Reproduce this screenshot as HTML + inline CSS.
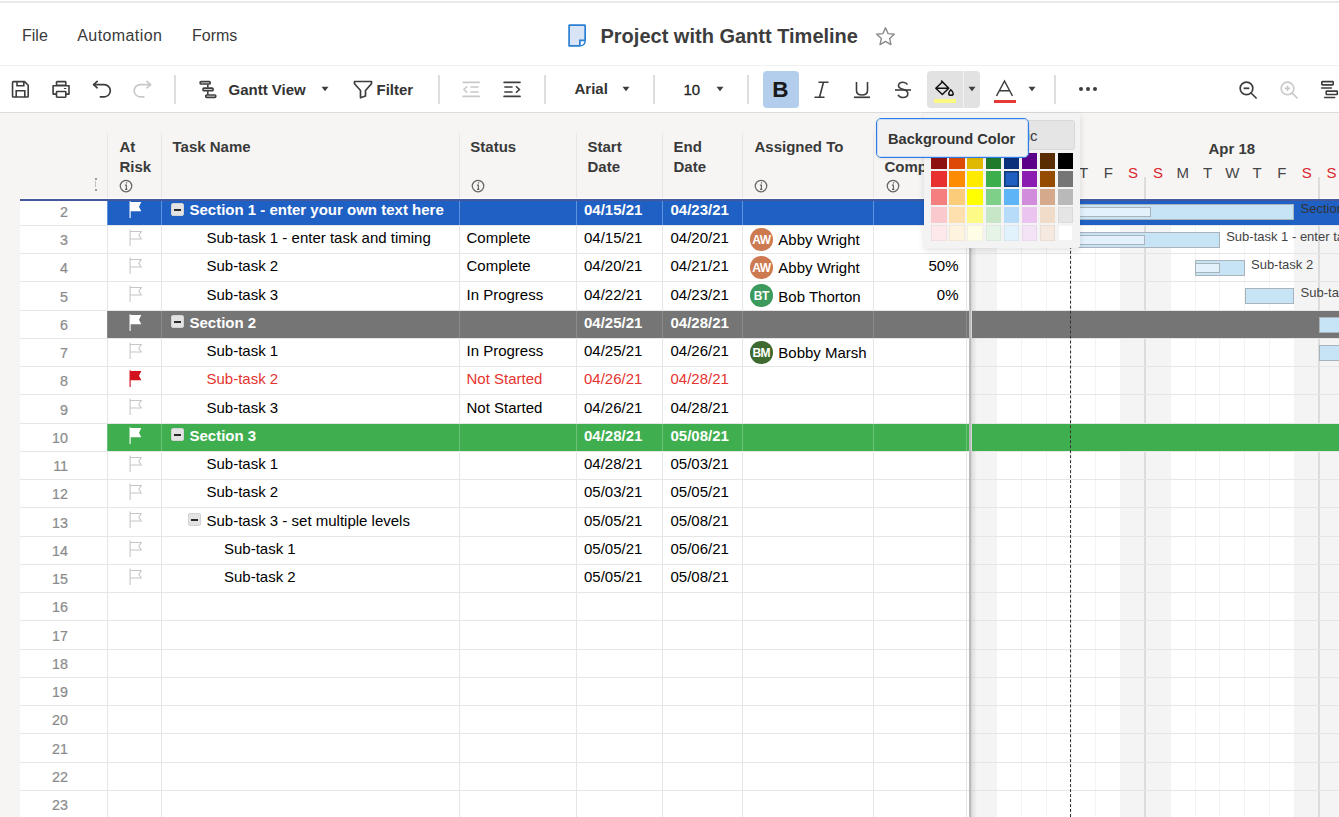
<!DOCTYPE html><html><head><meta charset="utf-8"><style>
html,body{margin:0;padding:0;}
body{width:1339px;height:817px;position:relative;overflow:hidden;background:#fff;font-family:"Liberation Sans",sans-serif;}
.t{position:absolute;white-space:nowrap;}
.r{position:absolute;}
svg.r{overflow:visible}
</style></head><body>
<div class="r" style="left:0.00px;top:1.00px;width:1339.00px;height:2.00px;background:#e9e9e9;"></div>
<div class="t" style="left:22.00px;top:28.46px;font-size:16px;line-height:16px;font-weight:400;color:#3a3a3a;">File</div>
<div class="t" style="left:77.30px;top:28.46px;font-size:16px;line-height:16px;font-weight:400;color:#3a3a3a;letter-spacing:0.4px">Automation</div>
<div class="t" style="left:192.00px;top:28.46px;font-size:16px;line-height:16px;font-weight:400;color:#3a3a3a;">Forms</div>
<svg class="r" style="left:567px;top:23px;" width="20" height="25" viewBox="0 0 20 25"><path d="M2.1 2.6 Q2.1 2.1 2.6 2.1 H17.6 Q18.15 2.1 18.15 2.6 V16.8 Q18.15 22.9 12.1 22.9 H2.1 Z" fill="#d9e5f6" stroke="#2a7fd2" stroke-width="1.7" stroke-linejoin="round"/><path d="M12.9 17.3 H17.6 Q17.2 22.2 12.9 22.4 Z" fill="#fff"/><path d="M18.15 17.3 H12.9 V22.9" fill="none" stroke="#2a7fd2" stroke-width="1.7"/></svg>
<div class="t" style="left:600.50px;top:26.07px;font-size:20px;line-height:20px;font-weight:700;color:#3d3d3d;">Project with Gantt Timeline</div>
<svg class="r" style="left:875px;top:25.5px;" width="21" height="21" viewBox="0 0 21 21"><path d="M10.5 1.8 L13.1 7.6 L19.3 8.2 L14.6 12.4 L16 18.6 L10.5 15.4 L5 18.6 L6.4 12.4 L1.7 8.2 L7.9 7.6 Z" fill="none" stroke="#8a8a8a" stroke-width="1.4" stroke-linejoin="round"/></svg>
<div class="r" style="left:0.00px;top:65.00px;width:1339.00px;height:1.00px;background:#f1f1f1;"></div>
<div class="r" style="left:0.00px;top:112.00px;width:1339.00px;height:1.00px;background:#dcdcdc;"></div>
<svg class="r" style="left:11px;top:80px;" width="19" height="19" viewBox="0 0 19 19"><path d="M2.3 1.6 H13.6 L17.2 5.2 V16.2 Q17.2 17 16.4 17 H2.3 Q1.55 17 1.55 16.2 V2.4 Q1.55 1.6 2.3 1.6 Z" fill="none" stroke="#3d3d3d" stroke-width="1.6" stroke-linejoin="round"/><path d="M6 1.6 V5.7 H12.8 V1.6" fill="none" stroke="#3d3d3d" stroke-width="1.6"/><path d="M5.2 17 V10.8 H13.8 V17" fill="none" stroke="#3d3d3d" stroke-width="1.6"/></svg>
<svg class="r" style="left:52px;top:80px;" width="19" height="19" viewBox="0 0 19 19"><rect x="4.5" y="1.6" width="9.3" height="3.6" rx="0.6" fill="none" stroke="#3d3d3d" stroke-width="1.6"/><path d="M4.5 14.1 H1.1 V5.8 H17 V14.1 H13.8" fill="none" stroke="#3d3d3d" stroke-width="1.6" stroke-linejoin="round"/><rect x="4.5" y="11.5" width="9.3" height="5.7" rx="0.6" fill="none" stroke="#3d3d3d" stroke-width="1.6"/><rect x="11.8" y="7.9" width="2.6" height="1.1" rx="0.5" fill="#3d3d3d"/></svg>
<svg class="r" style="left:92px;top:81px;" width="20" height="18" viewBox="0 0 20 18"><path d="M1.8 3.6 H12.2 A6.1 6.1 0 0 1 12.2 15.8 H8.4" fill="none" stroke="#3d3d3d" stroke-width="1.7" stroke-linecap="round"/><path d="M5.2 0.4 L1.6 3.6 L5.2 6.8" fill="none" stroke="#3d3d3d" stroke-width="1.7" stroke-linecap="round" stroke-linejoin="round"/></svg>
<svg class="r" style="left:132px;top:81px;" width="20" height="18" viewBox="0 0 20 18"><path d="M18.4 3.6 H8.3 A6.1 6.1 0 0 0 8.3 15.8 H11.8" fill="none" stroke="#c8c8c8" stroke-width="1.7" stroke-linecap="round"/><path d="M15 0.4 L18.6 3.6 L15 6.8" fill="none" stroke="#c8c8c8" stroke-width="1.7" stroke-linecap="round" stroke-linejoin="round"/></svg>
<div class="r" style="left:174.00px;top:75.00px;width:2.00px;height:29.00px;background:#dedede;"></div>
<svg class="r" style="left:198px;top:80px;" width="20" height="19" viewBox="0 0 20 19"><rect x="2.2" y="1.6" width="9.9" height="2.4" rx="0.8" fill="none" stroke="#3d3d3d" stroke-width="1.7"/><rect x="5.1" y="8.2" width="9.9" height="2.5" rx="0.8" fill="none" stroke="#3d3d3d" stroke-width="1.7"/><rect x="7.8" y="15" width="9.9" height="2.4" rx="0.8" fill="none" stroke="#3d3d3d" stroke-width="1.7"/><path d="M9.8 4.5 V7.6 M9.8 11.3 V14.4" stroke="#3d3d3d" stroke-width="1.6"/></svg>
<div class="t" style="left:228.50px;top:81.80px;font-size:15px;line-height:15px;font-weight:700;color:#333;">Gantt View</div>
<svg class="r" style="left:321px;top:86px;" width="8" height="6" viewBox="0 0 8 6"><path d="M0.5 0.8 H7.5 L4 5.3 Z" fill="#3d3d3d"/></svg>
<svg class="r" style="left:353px;top:80px;" width="20" height="19" viewBox="0 0 20 19"><path d="M1.5 1.5 H18.5 V3.8 L12.5 10.5 V16 L7.5 17.8 V10.5 L1.5 3.8 Z" fill="none" stroke="#3d3d3d" stroke-width="1.7" stroke-linejoin="round"/></svg>
<div class="t" style="left:376.50px;top:82.10px;font-size:15px;line-height:15px;font-weight:700;color:#333;">Filter</div>
<div class="r" style="left:438.00px;top:75.00px;width:2.00px;height:29.00px;background:#dedede;"></div>
<svg class="r" style="left:461px;top:81px;" width="20" height="17" viewBox="0 0 20 17"><path d="M2.3 1.3 H18.2 M2.3 15.4 H18.2" stroke="#c8c8c8" stroke-width="1.7" stroke-linecap="round"/><path d="M9.4 6 H17.6 M9.4 11 H17.6" stroke="#c8c8c8" stroke-width="1.6"/><path d="M6.2 5.2 L2.9 8.5 L6.2 11.8" fill="none" stroke="#c8c8c8" stroke-width="1.5"/></svg>
<svg class="r" style="left:502px;top:81px;" width="20" height="17" viewBox="0 0 20 17"><path d="M2.1 1.3 H18 M2.1 15.4 H18" stroke="#3d3d3d" stroke-width="1.7" stroke-linecap="round"/><path d="M2.3 6 H10.6 M2.3 11 H10.6" stroke="#3d3d3d" stroke-width="1.6"/><path d="M14 5.2 L17.4 8.5 L14 11.8" fill="none" stroke="#3d3d3d" stroke-width="1.6"/></svg>
<div class="r" style="left:544.00px;top:75.00px;width:2.00px;height:29.00px;background:#dedede;"></div>
<div class="t" style="left:574.50px;top:81.30px;font-size:15px;line-height:15px;font-weight:700;color:#333;">Arial</div>
<svg class="r" style="left:621.5px;top:86px;" width="8" height="6" viewBox="0 0 8 6"><path d="M0.5 0.8 H7.5 L4 5.3 Z" fill="#3d3d3d"/></svg>
<div class="r" style="left:653.00px;top:75.00px;width:2.00px;height:29.00px;background:#dedede;"></div>
<div class="t" style="left:683.50px;top:81.80px;font-size:15px;line-height:15px;font-weight:400;color:#222;-webkit-text-stroke:0.3px #222">10</div>
<svg class="r" style="left:715.5px;top:86px;" width="8" height="6" viewBox="0 0 8 6"><path d="M0.5 0.8 H7.5 L4 5.3 Z" fill="#3d3d3d"/></svg>
<div class="r" style="left:747.00px;top:75.00px;width:2.00px;height:29.00px;background:#dedede;"></div>
<div class="r" style="left:763.00px;top:71.00px;width:36.00px;height:37.00px;background:#b3cdec;border-radius:4px"></div>
<div class="t" style="left:772.20px;top:78.55px;font-size:22.5px;line-height:22.5px;font-weight:700;color:#1a1a1a;">B</div>
<svg class="r" style="left:813px;top:81px;" width="17" height="18" viewBox="0 0 17 18"><path d="M5.5 1.2 H15.5 M1.5 16.3 H11.5 M10.5 1.2 L6.5 16.3" stroke="#3d3d3d" stroke-width="1.6" fill="none"/></svg>
<svg class="r" style="left:853px;top:81px;" width="18" height="18" viewBox="0 0 18 18"><path d="M3.5 1 V9.5 Q3.5 14 9 14 Q14.5 14 14.5 9.5 V1" stroke="#3d3d3d" stroke-width="1.6" fill="none"/><path d="M1 16.3 H17" stroke="#3d3d3d" stroke-width="1.7"/></svg>
<svg class="r" style="left:894px;top:81px;" width="18" height="18" viewBox="0 0 18 18"><path d="M13.5 3.5 Q12 1.2 9 1.2 Q4.5 1.2 4.5 4.8 Q4.5 7.2 9 8.2 Q13.8 9.5 13.8 12.5 Q13.8 16.5 9 16.5 Q5.5 16.5 4 13.8" stroke="#3d3d3d" stroke-width="1.6" fill="none"/><path d="M1 9 H17" stroke="#3d3d3d" stroke-width="1.6"/></svg>
<div class="r" style="left:926.50px;top:71.00px;width:53.00px;height:37.00px;background:#e2e2e2;border-radius:4px"></div>
<div class="r" style="left:963.00px;top:71.00px;width:1.00px;height:37.00px;background:#f2f2f2;"></div>
<svg class="r" style="left:934px;top:79px;" width="22" height="18" viewBox="0 0 22 18"><path d="M7.2 1.6 L14.8 9.3 L8.3 15.5 L1.8 9.3 L8.4 3 M1.8 9.3 H14.8" fill="none" stroke="#111" stroke-width="1.5" stroke-linejoin="round"/><path d="M16.8 10.8 Q19.2 13 19.2 14.4 Q19.2 16.3 16.9 16.3 Q14.7 16.3 14.7 14.4 Q14.7 13 16.8 10.8 Z" fill="none" stroke="#111" stroke-width="1.5"/></svg>
<div class="r" style="left:934.20px;top:99.40px;width:21.60px;height:3.60px;background:#faf87e;"></div>
<svg class="r" style="left:967.5px;top:86px;" width="8" height="6" viewBox="0 0 8 6"><path d="M0.5 0.8 H7.5 L4 5.3 Z" fill="#3d3d3d"/></svg>
<svg class="r" style="left:995px;top:80px;" width="19" height="17" viewBox="0 0 19 17"><path d="M1.5 16 L9.5 1 L17.5 16 M4.8 10.8 H14.2" fill="none" stroke="#3d3d3d" stroke-width="1.5"/></svg>
<div class="r" style="left:994.00px;top:99.50px;width:22.00px;height:3.50px;background:#e53935;"></div>
<svg class="r" style="left:1027.5px;top:86px;" width="8" height="6" viewBox="0 0 8 6"><path d="M0.5 0.8 H7.5 L4 5.3 Z" fill="#3d3d3d"/></svg>
<div class="r" style="left:1054.00px;top:75.00px;width:2.00px;height:29.00px;background:#dedede;"></div>
<div class="r" style="left:1078.7px;top:87.2px;width:4.2px;height:4.2px;border-radius:50%;background:#3d3d3d"></div>
<div class="r" style="left:1085.9px;top:87.2px;width:4.2px;height:4.2px;border-radius:50%;background:#3d3d3d"></div>
<div class="r" style="left:1093.1px;top:87.2px;width:4.2px;height:4.2px;border-radius:50%;background:#3d3d3d"></div>
<svg class="r" style="left:1238px;top:80.5px;" width="21" height="20" viewBox="0 0 21 20"><circle cx="8.5" cy="7.4" r="6.3" fill="none" stroke="#3d3d3d" stroke-width="1.7"/><path d="M5.6 7.3 H11.3" stroke="#3d3d3d" stroke-width="1.8"/><path d="M13.1 12 L18.6 17.5" stroke="#3d3d3d" stroke-width="1.7"/></svg>
<svg class="r" style="left:1279px;top:80.5px;" width="21" height="20" viewBox="0 0 21 20"><circle cx="8.5" cy="7.4" r="6.3" fill="none" stroke="#c8c8c8" stroke-width="1.6"/><path d="M5.8 7.4 H11.2 M8.5 4.7 V10.1" stroke="#c8c8c8" stroke-width="1.6"/><path d="M13.1 12 L18.6 17.5" stroke="#c8c8c8" stroke-width="1.6"/></svg>
<svg class="r" style="left:1320px;top:80px;" width="22" height="20" viewBox="0 0 22 20"><rect x="1.8" y="1.6" width="11.4" height="3.3" rx="0.6" fill="none" stroke="#3d3d3d" stroke-width="1.6"/><path d="M1.6 8 H11.3" stroke="#3d3d3d" stroke-width="1.5" stroke-linecap="round"/><rect x="6.2" y="11.1" width="11.1" height="3.4" rx="0.6" fill="none" stroke="#3d3d3d" stroke-width="1.6"/><path d="M4.7 17.5 H14.6" stroke="#3d3d3d" stroke-width="1.5" stroke-linecap="round"/></svg>
<div class="r" style="left:0.00px;top:113.00px;width:1339.00px;height:85.00px;background:#f6f5f4;"></div>
<div class="r" style="left:0.00px;top:198.00px;width:20.00px;height:619.00px;background:#f6f5f4;"></div>
<div class="r" style="left:20.00px;top:198.00px;width:1319.00px;height:1.00px;background:#ffffff;"></div>
<div class="r" style="left:20.00px;top:201.00px;width:1319.00px;height:616.00px;background:#fff;"></div>
<div class="r" style="left:972.00px;top:201.00px;width:24.79px;height:616.00px;background:#f4f4f4;"></div>
<div class="r" style="left:1120.74px;top:201.00px;width:24.79px;height:616.00px;background:#f4f4f4;"></div>
<div class="r" style="left:1145.53px;top:201.00px;width:24.79px;height:616.00px;background:#f4f4f4;"></div>
<div class="r" style="left:1294.27px;top:201.00px;width:24.79px;height:616.00px;background:#f4f4f4;"></div>
<div class="r" style="left:1319.06px;top:201.00px;width:24.79px;height:616.00px;background:#f4f4f4;"></div>
<div class="r" style="left:996.00px;top:201.00px;width:1.00px;height:616.00px;background:#f3f3f3;"></div>
<div class="r" style="left:1021.00px;top:201.00px;width:1.00px;height:616.00px;background:#f3f3f3;"></div>
<div class="r" style="left:1046.00px;top:201.00px;width:1.00px;height:616.00px;background:#f3f3f3;"></div>
<div class="r" style="left:1071.00px;top:201.00px;width:1.00px;height:616.00px;background:#f3f3f3;"></div>
<div class="r" style="left:1095.00px;top:201.00px;width:1.00px;height:616.00px;background:#f3f3f3;"></div>
<div class="r" style="left:1120.00px;top:201.00px;width:1.00px;height:616.00px;background:#f3f3f3;"></div>
<div class="r" style="left:1170.00px;top:201.00px;width:1.00px;height:616.00px;background:#f3f3f3;"></div>
<div class="r" style="left:1195.00px;top:201.00px;width:1.00px;height:616.00px;background:#f3f3f3;"></div>
<div class="r" style="left:1219.00px;top:201.00px;width:1.00px;height:616.00px;background:#f3f3f3;"></div>
<div class="r" style="left:1244.00px;top:201.00px;width:1.00px;height:616.00px;background:#f3f3f3;"></div>
<div class="r" style="left:1269.00px;top:201.00px;width:1.00px;height:616.00px;background:#f3f3f3;"></div>
<div class="r" style="left:1294.00px;top:201.00px;width:1.00px;height:616.00px;background:#f3f3f3;"></div>
<div class="r" style="left:1343.00px;top:201.00px;width:1.00px;height:616.00px;background:#f3f3f3;"></div>
<div class="r" style="left:1144.30px;top:177.00px;width:2.00px;height:640.00px;background:#dcdcdc;"></div>
<div class="r" style="left:1318.20px;top:177.00px;width:2.00px;height:640.00px;background:#dcdcdc;"></div>
<div class="r" style="left:107.00px;top:201.00px;width:1232.00px;height:24.00px;background:#1f60c4;"></div>
<div class="r" style="left:20.00px;top:225.00px;width:1319.00px;height:1.00px;background:#e6e6e6;"></div>
<div class="r" style="left:20.00px;top:253.00px;width:1319.00px;height:1.00px;background:#e6e6e6;"></div>
<div class="r" style="left:20.00px;top:281.00px;width:1319.00px;height:1.00px;background:#e6e6e6;"></div>
<div class="r" style="left:20.00px;top:310.00px;width:1319.00px;height:1.00px;background:#e6e6e6;"></div>
<div class="r" style="left:107.00px;top:311.00px;width:1232.00px;height:27.00px;background:#757575;"></div>
<div class="r" style="left:20.00px;top:338.00px;width:1319.00px;height:1.00px;background:#e6e6e6;"></div>
<div class="r" style="left:20.00px;top:366.00px;width:1319.00px;height:1.00px;background:#e6e6e6;"></div>
<div class="r" style="left:20.00px;top:394.00px;width:1319.00px;height:1.00px;background:#e6e6e6;"></div>
<div class="r" style="left:20.00px;top:423.00px;width:1319.00px;height:1.00px;background:#e6e6e6;"></div>
<div class="r" style="left:107.00px;top:424.00px;width:1232.00px;height:27.00px;background:#3fae4f;"></div>
<div class="r" style="left:20.00px;top:451.00px;width:1319.00px;height:1.00px;background:#e6e6e6;"></div>
<div class="r" style="left:20.00px;top:479.00px;width:1319.00px;height:1.00px;background:#e6e6e6;"></div>
<div class="r" style="left:20.00px;top:507.00px;width:1319.00px;height:1.00px;background:#e6e6e6;"></div>
<div class="r" style="left:20.00px;top:536.00px;width:1319.00px;height:1.00px;background:#e6e6e6;"></div>
<div class="r" style="left:20.00px;top:564.00px;width:1319.00px;height:1.00px;background:#e6e6e6;"></div>
<div class="r" style="left:20.00px;top:592.00px;width:1319.00px;height:1.00px;background:#e6e6e6;"></div>
<div class="r" style="left:20.00px;top:620.00px;width:1319.00px;height:1.00px;background:#e6e6e6;"></div>
<div class="r" style="left:20.00px;top:649.00px;width:1319.00px;height:1.00px;background:#e6e6e6;"></div>
<div class="r" style="left:20.00px;top:677.00px;width:1319.00px;height:1.00px;background:#e6e6e6;"></div>
<div class="r" style="left:20.00px;top:705.00px;width:1319.00px;height:1.00px;background:#e6e6e6;"></div>
<div class="r" style="left:20.00px;top:733.00px;width:1319.00px;height:1.00px;background:#e6e6e6;"></div>
<div class="r" style="left:20.00px;top:762.00px;width:1319.00px;height:1.00px;background:#e6e6e6;"></div>
<div class="r" style="left:20.00px;top:790.00px;width:1319.00px;height:1.00px;background:#e6e6e6;"></div>
<div class="r" style="left:20.00px;top:818.00px;width:1319.00px;height:1.00px;background:#e6e6e6;"></div>
<div class="r" style="left:107.00px;top:133.00px;width:1.00px;height:65.00px;background:#e6e6e6;"></div>
<div class="r" style="left:161.00px;top:133.00px;width:1.00px;height:65.00px;background:#e6e6e6;"></div>
<div class="r" style="left:459.00px;top:133.00px;width:1.00px;height:65.00px;background:#e6e6e6;"></div>
<div class="r" style="left:576.00px;top:133.00px;width:1.00px;height:65.00px;background:#e6e6e6;"></div>
<div class="r" style="left:662.00px;top:133.00px;width:1.00px;height:65.00px;background:#e6e6e6;"></div>
<div class="r" style="left:742.00px;top:133.00px;width:1.00px;height:65.00px;background:#e6e6e6;"></div>
<div class="r" style="left:873.00px;top:133.00px;width:1.00px;height:65.00px;background:#e6e6e6;"></div>
<div class="r" style="left:966.00px;top:133.00px;width:1.00px;height:65.00px;background:#e6e6e6;"></div>
<div class="r" style="left:107.00px;top:201.00px;width:1.00px;height:24.00px;background:#5f92dd;"></div>
<div class="r" style="left:107.00px;top:226.00px;width:1.00px;height:27.00px;background:#e6e6e6;"></div>
<div class="r" style="left:107.00px;top:254.00px;width:1.00px;height:27.00px;background:#e6e6e6;"></div>
<div class="r" style="left:107.00px;top:282.00px;width:1.00px;height:28.00px;background:#e6e6e6;"></div>
<div class="r" style="left:107.00px;top:311.00px;width:1.00px;height:27.00px;background:#8a8a8a;"></div>
<div class="r" style="left:107.00px;top:339.00px;width:1.00px;height:27.00px;background:#e6e6e6;"></div>
<div class="r" style="left:107.00px;top:367.00px;width:1.00px;height:27.00px;background:#e6e6e6;"></div>
<div class="r" style="left:107.00px;top:395.00px;width:1.00px;height:28.00px;background:#e6e6e6;"></div>
<div class="r" style="left:107.00px;top:424.00px;width:1.00px;height:27.00px;background:#6cc178;"></div>
<div class="r" style="left:107.00px;top:452.00px;width:1.00px;height:27.00px;background:#e6e6e6;"></div>
<div class="r" style="left:107.00px;top:480.00px;width:1.00px;height:27.00px;background:#e6e6e6;"></div>
<div class="r" style="left:107.00px;top:508.00px;width:1.00px;height:28.00px;background:#e6e6e6;"></div>
<div class="r" style="left:107.00px;top:537.00px;width:1.00px;height:27.00px;background:#e6e6e6;"></div>
<div class="r" style="left:107.00px;top:565.00px;width:1.00px;height:27.00px;background:#e6e6e6;"></div>
<div class="r" style="left:107.00px;top:593.00px;width:1.00px;height:27.00px;background:#e6e6e6;"></div>
<div class="r" style="left:107.00px;top:621.00px;width:1.00px;height:28.00px;background:#e6e6e6;"></div>
<div class="r" style="left:107.00px;top:650.00px;width:1.00px;height:27.00px;background:#e6e6e6;"></div>
<div class="r" style="left:107.00px;top:678.00px;width:1.00px;height:27.00px;background:#e6e6e6;"></div>
<div class="r" style="left:107.00px;top:706.00px;width:1.00px;height:27.00px;background:#e6e6e6;"></div>
<div class="r" style="left:107.00px;top:734.00px;width:1.00px;height:28.00px;background:#e6e6e6;"></div>
<div class="r" style="left:107.00px;top:763.00px;width:1.00px;height:27.00px;background:#e6e6e6;"></div>
<div class="r" style="left:107.00px;top:791.00px;width:1.00px;height:27.00px;background:#e6e6e6;"></div>
<div class="r" style="left:161.00px;top:201.00px;width:1.00px;height:24.00px;background:#5f92dd;"></div>
<div class="r" style="left:161.00px;top:226.00px;width:1.00px;height:27.00px;background:#e6e6e6;"></div>
<div class="r" style="left:161.00px;top:254.00px;width:1.00px;height:27.00px;background:#e6e6e6;"></div>
<div class="r" style="left:161.00px;top:282.00px;width:1.00px;height:28.00px;background:#e6e6e6;"></div>
<div class="r" style="left:161.00px;top:311.00px;width:1.00px;height:27.00px;background:#8a8a8a;"></div>
<div class="r" style="left:161.00px;top:339.00px;width:1.00px;height:27.00px;background:#e6e6e6;"></div>
<div class="r" style="left:161.00px;top:367.00px;width:1.00px;height:27.00px;background:#e6e6e6;"></div>
<div class="r" style="left:161.00px;top:395.00px;width:1.00px;height:28.00px;background:#e6e6e6;"></div>
<div class="r" style="left:161.00px;top:424.00px;width:1.00px;height:27.00px;background:#6cc178;"></div>
<div class="r" style="left:161.00px;top:452.00px;width:1.00px;height:27.00px;background:#e6e6e6;"></div>
<div class="r" style="left:161.00px;top:480.00px;width:1.00px;height:27.00px;background:#e6e6e6;"></div>
<div class="r" style="left:161.00px;top:508.00px;width:1.00px;height:28.00px;background:#e6e6e6;"></div>
<div class="r" style="left:161.00px;top:537.00px;width:1.00px;height:27.00px;background:#e6e6e6;"></div>
<div class="r" style="left:161.00px;top:565.00px;width:1.00px;height:27.00px;background:#e6e6e6;"></div>
<div class="r" style="left:161.00px;top:593.00px;width:1.00px;height:27.00px;background:#e6e6e6;"></div>
<div class="r" style="left:161.00px;top:621.00px;width:1.00px;height:28.00px;background:#e6e6e6;"></div>
<div class="r" style="left:161.00px;top:650.00px;width:1.00px;height:27.00px;background:#e6e6e6;"></div>
<div class="r" style="left:161.00px;top:678.00px;width:1.00px;height:27.00px;background:#e6e6e6;"></div>
<div class="r" style="left:161.00px;top:706.00px;width:1.00px;height:27.00px;background:#e6e6e6;"></div>
<div class="r" style="left:161.00px;top:734.00px;width:1.00px;height:28.00px;background:#e6e6e6;"></div>
<div class="r" style="left:161.00px;top:763.00px;width:1.00px;height:27.00px;background:#e6e6e6;"></div>
<div class="r" style="left:161.00px;top:791.00px;width:1.00px;height:27.00px;background:#e6e6e6;"></div>
<div class="r" style="left:459.00px;top:201.00px;width:1.00px;height:24.00px;background:#5f92dd;"></div>
<div class="r" style="left:459.00px;top:226.00px;width:1.00px;height:27.00px;background:#e6e6e6;"></div>
<div class="r" style="left:459.00px;top:254.00px;width:1.00px;height:27.00px;background:#e6e6e6;"></div>
<div class="r" style="left:459.00px;top:282.00px;width:1.00px;height:28.00px;background:#e6e6e6;"></div>
<div class="r" style="left:459.00px;top:311.00px;width:1.00px;height:27.00px;background:#8a8a8a;"></div>
<div class="r" style="left:459.00px;top:339.00px;width:1.00px;height:27.00px;background:#e6e6e6;"></div>
<div class="r" style="left:459.00px;top:367.00px;width:1.00px;height:27.00px;background:#e6e6e6;"></div>
<div class="r" style="left:459.00px;top:395.00px;width:1.00px;height:28.00px;background:#e6e6e6;"></div>
<div class="r" style="left:459.00px;top:424.00px;width:1.00px;height:27.00px;background:#6cc178;"></div>
<div class="r" style="left:459.00px;top:452.00px;width:1.00px;height:27.00px;background:#e6e6e6;"></div>
<div class="r" style="left:459.00px;top:480.00px;width:1.00px;height:27.00px;background:#e6e6e6;"></div>
<div class="r" style="left:459.00px;top:508.00px;width:1.00px;height:28.00px;background:#e6e6e6;"></div>
<div class="r" style="left:459.00px;top:537.00px;width:1.00px;height:27.00px;background:#e6e6e6;"></div>
<div class="r" style="left:459.00px;top:565.00px;width:1.00px;height:27.00px;background:#e6e6e6;"></div>
<div class="r" style="left:459.00px;top:593.00px;width:1.00px;height:27.00px;background:#e6e6e6;"></div>
<div class="r" style="left:459.00px;top:621.00px;width:1.00px;height:28.00px;background:#e6e6e6;"></div>
<div class="r" style="left:459.00px;top:650.00px;width:1.00px;height:27.00px;background:#e6e6e6;"></div>
<div class="r" style="left:459.00px;top:678.00px;width:1.00px;height:27.00px;background:#e6e6e6;"></div>
<div class="r" style="left:459.00px;top:706.00px;width:1.00px;height:27.00px;background:#e6e6e6;"></div>
<div class="r" style="left:459.00px;top:734.00px;width:1.00px;height:28.00px;background:#e6e6e6;"></div>
<div class="r" style="left:459.00px;top:763.00px;width:1.00px;height:27.00px;background:#e6e6e6;"></div>
<div class="r" style="left:459.00px;top:791.00px;width:1.00px;height:27.00px;background:#e6e6e6;"></div>
<div class="r" style="left:576.00px;top:201.00px;width:1.00px;height:24.00px;background:#5f92dd;"></div>
<div class="r" style="left:576.00px;top:226.00px;width:1.00px;height:27.00px;background:#e6e6e6;"></div>
<div class="r" style="left:576.00px;top:254.00px;width:1.00px;height:27.00px;background:#e6e6e6;"></div>
<div class="r" style="left:576.00px;top:282.00px;width:1.00px;height:28.00px;background:#e6e6e6;"></div>
<div class="r" style="left:576.00px;top:311.00px;width:1.00px;height:27.00px;background:#8a8a8a;"></div>
<div class="r" style="left:576.00px;top:339.00px;width:1.00px;height:27.00px;background:#e6e6e6;"></div>
<div class="r" style="left:576.00px;top:367.00px;width:1.00px;height:27.00px;background:#e6e6e6;"></div>
<div class="r" style="left:576.00px;top:395.00px;width:1.00px;height:28.00px;background:#e6e6e6;"></div>
<div class="r" style="left:576.00px;top:424.00px;width:1.00px;height:27.00px;background:#6cc178;"></div>
<div class="r" style="left:576.00px;top:452.00px;width:1.00px;height:27.00px;background:#e6e6e6;"></div>
<div class="r" style="left:576.00px;top:480.00px;width:1.00px;height:27.00px;background:#e6e6e6;"></div>
<div class="r" style="left:576.00px;top:508.00px;width:1.00px;height:28.00px;background:#e6e6e6;"></div>
<div class="r" style="left:576.00px;top:537.00px;width:1.00px;height:27.00px;background:#e6e6e6;"></div>
<div class="r" style="left:576.00px;top:565.00px;width:1.00px;height:27.00px;background:#e6e6e6;"></div>
<div class="r" style="left:576.00px;top:593.00px;width:1.00px;height:27.00px;background:#e6e6e6;"></div>
<div class="r" style="left:576.00px;top:621.00px;width:1.00px;height:28.00px;background:#e6e6e6;"></div>
<div class="r" style="left:576.00px;top:650.00px;width:1.00px;height:27.00px;background:#e6e6e6;"></div>
<div class="r" style="left:576.00px;top:678.00px;width:1.00px;height:27.00px;background:#e6e6e6;"></div>
<div class="r" style="left:576.00px;top:706.00px;width:1.00px;height:27.00px;background:#e6e6e6;"></div>
<div class="r" style="left:576.00px;top:734.00px;width:1.00px;height:28.00px;background:#e6e6e6;"></div>
<div class="r" style="left:576.00px;top:763.00px;width:1.00px;height:27.00px;background:#e6e6e6;"></div>
<div class="r" style="left:576.00px;top:791.00px;width:1.00px;height:27.00px;background:#e6e6e6;"></div>
<div class="r" style="left:662.00px;top:201.00px;width:1.00px;height:24.00px;background:#5f92dd;"></div>
<div class="r" style="left:662.00px;top:226.00px;width:1.00px;height:27.00px;background:#e6e6e6;"></div>
<div class="r" style="left:662.00px;top:254.00px;width:1.00px;height:27.00px;background:#e6e6e6;"></div>
<div class="r" style="left:662.00px;top:282.00px;width:1.00px;height:28.00px;background:#e6e6e6;"></div>
<div class="r" style="left:662.00px;top:311.00px;width:1.00px;height:27.00px;background:#8a8a8a;"></div>
<div class="r" style="left:662.00px;top:339.00px;width:1.00px;height:27.00px;background:#e6e6e6;"></div>
<div class="r" style="left:662.00px;top:367.00px;width:1.00px;height:27.00px;background:#e6e6e6;"></div>
<div class="r" style="left:662.00px;top:395.00px;width:1.00px;height:28.00px;background:#e6e6e6;"></div>
<div class="r" style="left:662.00px;top:424.00px;width:1.00px;height:27.00px;background:#6cc178;"></div>
<div class="r" style="left:662.00px;top:452.00px;width:1.00px;height:27.00px;background:#e6e6e6;"></div>
<div class="r" style="left:662.00px;top:480.00px;width:1.00px;height:27.00px;background:#e6e6e6;"></div>
<div class="r" style="left:662.00px;top:508.00px;width:1.00px;height:28.00px;background:#e6e6e6;"></div>
<div class="r" style="left:662.00px;top:537.00px;width:1.00px;height:27.00px;background:#e6e6e6;"></div>
<div class="r" style="left:662.00px;top:565.00px;width:1.00px;height:27.00px;background:#e6e6e6;"></div>
<div class="r" style="left:662.00px;top:593.00px;width:1.00px;height:27.00px;background:#e6e6e6;"></div>
<div class="r" style="left:662.00px;top:621.00px;width:1.00px;height:28.00px;background:#e6e6e6;"></div>
<div class="r" style="left:662.00px;top:650.00px;width:1.00px;height:27.00px;background:#e6e6e6;"></div>
<div class="r" style="left:662.00px;top:678.00px;width:1.00px;height:27.00px;background:#e6e6e6;"></div>
<div class="r" style="left:662.00px;top:706.00px;width:1.00px;height:27.00px;background:#e6e6e6;"></div>
<div class="r" style="left:662.00px;top:734.00px;width:1.00px;height:28.00px;background:#e6e6e6;"></div>
<div class="r" style="left:662.00px;top:763.00px;width:1.00px;height:27.00px;background:#e6e6e6;"></div>
<div class="r" style="left:662.00px;top:791.00px;width:1.00px;height:27.00px;background:#e6e6e6;"></div>
<div class="r" style="left:742.00px;top:201.00px;width:1.00px;height:24.00px;background:#5f92dd;"></div>
<div class="r" style="left:742.00px;top:226.00px;width:1.00px;height:27.00px;background:#e6e6e6;"></div>
<div class="r" style="left:742.00px;top:254.00px;width:1.00px;height:27.00px;background:#e6e6e6;"></div>
<div class="r" style="left:742.00px;top:282.00px;width:1.00px;height:28.00px;background:#e6e6e6;"></div>
<div class="r" style="left:742.00px;top:311.00px;width:1.00px;height:27.00px;background:#8a8a8a;"></div>
<div class="r" style="left:742.00px;top:339.00px;width:1.00px;height:27.00px;background:#e6e6e6;"></div>
<div class="r" style="left:742.00px;top:367.00px;width:1.00px;height:27.00px;background:#e6e6e6;"></div>
<div class="r" style="left:742.00px;top:395.00px;width:1.00px;height:28.00px;background:#e6e6e6;"></div>
<div class="r" style="left:742.00px;top:424.00px;width:1.00px;height:27.00px;background:#6cc178;"></div>
<div class="r" style="left:742.00px;top:452.00px;width:1.00px;height:27.00px;background:#e6e6e6;"></div>
<div class="r" style="left:742.00px;top:480.00px;width:1.00px;height:27.00px;background:#e6e6e6;"></div>
<div class="r" style="left:742.00px;top:508.00px;width:1.00px;height:28.00px;background:#e6e6e6;"></div>
<div class="r" style="left:742.00px;top:537.00px;width:1.00px;height:27.00px;background:#e6e6e6;"></div>
<div class="r" style="left:742.00px;top:565.00px;width:1.00px;height:27.00px;background:#e6e6e6;"></div>
<div class="r" style="left:742.00px;top:593.00px;width:1.00px;height:27.00px;background:#e6e6e6;"></div>
<div class="r" style="left:742.00px;top:621.00px;width:1.00px;height:28.00px;background:#e6e6e6;"></div>
<div class="r" style="left:742.00px;top:650.00px;width:1.00px;height:27.00px;background:#e6e6e6;"></div>
<div class="r" style="left:742.00px;top:678.00px;width:1.00px;height:27.00px;background:#e6e6e6;"></div>
<div class="r" style="left:742.00px;top:706.00px;width:1.00px;height:27.00px;background:#e6e6e6;"></div>
<div class="r" style="left:742.00px;top:734.00px;width:1.00px;height:28.00px;background:#e6e6e6;"></div>
<div class="r" style="left:742.00px;top:763.00px;width:1.00px;height:27.00px;background:#e6e6e6;"></div>
<div class="r" style="left:742.00px;top:791.00px;width:1.00px;height:27.00px;background:#e6e6e6;"></div>
<div class="r" style="left:873.00px;top:201.00px;width:1.00px;height:24.00px;background:#5f92dd;"></div>
<div class="r" style="left:873.00px;top:226.00px;width:1.00px;height:27.00px;background:#e6e6e6;"></div>
<div class="r" style="left:873.00px;top:254.00px;width:1.00px;height:27.00px;background:#e6e6e6;"></div>
<div class="r" style="left:873.00px;top:282.00px;width:1.00px;height:28.00px;background:#e6e6e6;"></div>
<div class="r" style="left:873.00px;top:311.00px;width:1.00px;height:27.00px;background:#8a8a8a;"></div>
<div class="r" style="left:873.00px;top:339.00px;width:1.00px;height:27.00px;background:#e6e6e6;"></div>
<div class="r" style="left:873.00px;top:367.00px;width:1.00px;height:27.00px;background:#e6e6e6;"></div>
<div class="r" style="left:873.00px;top:395.00px;width:1.00px;height:28.00px;background:#e6e6e6;"></div>
<div class="r" style="left:873.00px;top:424.00px;width:1.00px;height:27.00px;background:#6cc178;"></div>
<div class="r" style="left:873.00px;top:452.00px;width:1.00px;height:27.00px;background:#e6e6e6;"></div>
<div class="r" style="left:873.00px;top:480.00px;width:1.00px;height:27.00px;background:#e6e6e6;"></div>
<div class="r" style="left:873.00px;top:508.00px;width:1.00px;height:28.00px;background:#e6e6e6;"></div>
<div class="r" style="left:873.00px;top:537.00px;width:1.00px;height:27.00px;background:#e6e6e6;"></div>
<div class="r" style="left:873.00px;top:565.00px;width:1.00px;height:27.00px;background:#e6e6e6;"></div>
<div class="r" style="left:873.00px;top:593.00px;width:1.00px;height:27.00px;background:#e6e6e6;"></div>
<div class="r" style="left:873.00px;top:621.00px;width:1.00px;height:28.00px;background:#e6e6e6;"></div>
<div class="r" style="left:873.00px;top:650.00px;width:1.00px;height:27.00px;background:#e6e6e6;"></div>
<div class="r" style="left:873.00px;top:678.00px;width:1.00px;height:27.00px;background:#e6e6e6;"></div>
<div class="r" style="left:873.00px;top:706.00px;width:1.00px;height:27.00px;background:#e6e6e6;"></div>
<div class="r" style="left:873.00px;top:734.00px;width:1.00px;height:28.00px;background:#e6e6e6;"></div>
<div class="r" style="left:873.00px;top:763.00px;width:1.00px;height:27.00px;background:#e6e6e6;"></div>
<div class="r" style="left:873.00px;top:791.00px;width:1.00px;height:27.00px;background:#e6e6e6;"></div>
<div class="r" style="left:966.00px;top:201.00px;width:1.00px;height:24.00px;background:#5f92dd;"></div>
<div class="r" style="left:966.00px;top:226.00px;width:1.00px;height:27.00px;background:#e6e6e6;"></div>
<div class="r" style="left:966.00px;top:254.00px;width:1.00px;height:27.00px;background:#e6e6e6;"></div>
<div class="r" style="left:966.00px;top:282.00px;width:1.00px;height:28.00px;background:#e6e6e6;"></div>
<div class="r" style="left:966.00px;top:311.00px;width:1.00px;height:27.00px;background:#8a8a8a;"></div>
<div class="r" style="left:966.00px;top:339.00px;width:1.00px;height:27.00px;background:#e6e6e6;"></div>
<div class="r" style="left:966.00px;top:367.00px;width:1.00px;height:27.00px;background:#e6e6e6;"></div>
<div class="r" style="left:966.00px;top:395.00px;width:1.00px;height:28.00px;background:#e6e6e6;"></div>
<div class="r" style="left:966.00px;top:424.00px;width:1.00px;height:27.00px;background:#6cc178;"></div>
<div class="r" style="left:966.00px;top:452.00px;width:1.00px;height:27.00px;background:#e6e6e6;"></div>
<div class="r" style="left:966.00px;top:480.00px;width:1.00px;height:27.00px;background:#e6e6e6;"></div>
<div class="r" style="left:966.00px;top:508.00px;width:1.00px;height:28.00px;background:#e6e6e6;"></div>
<div class="r" style="left:966.00px;top:537.00px;width:1.00px;height:27.00px;background:#e6e6e6;"></div>
<div class="r" style="left:966.00px;top:565.00px;width:1.00px;height:27.00px;background:#e6e6e6;"></div>
<div class="r" style="left:966.00px;top:593.00px;width:1.00px;height:27.00px;background:#e6e6e6;"></div>
<div class="r" style="left:966.00px;top:621.00px;width:1.00px;height:28.00px;background:#e6e6e6;"></div>
<div class="r" style="left:966.00px;top:650.00px;width:1.00px;height:27.00px;background:#e6e6e6;"></div>
<div class="r" style="left:966.00px;top:678.00px;width:1.00px;height:27.00px;background:#e6e6e6;"></div>
<div class="r" style="left:966.00px;top:706.00px;width:1.00px;height:27.00px;background:#e6e6e6;"></div>
<div class="r" style="left:966.00px;top:734.00px;width:1.00px;height:28.00px;background:#e6e6e6;"></div>
<div class="r" style="left:966.00px;top:763.00px;width:1.00px;height:27.00px;background:#e6e6e6;"></div>
<div class="r" style="left:966.00px;top:791.00px;width:1.00px;height:27.00px;background:#e6e6e6;"></div>
<div class="r" style="left:20.00px;top:201.00px;width:0.00px;height:0.00px;background:#fff;"></div>
<div class="r" style="left:20.00px;top:199.00px;width:1319.00px;height:2.00px;background:#42589b;"></div>
<div class="r" style="left:969.00px;top:113.00px;width:1.00px;height:704.00px;background:#bdbdbd;"></div>
<div class="r" style="left:970.00px;top:113.00px;width:1.00px;height:704.00px;background:#b8b8b8;"></div>
<div class="r" style="left:971.00px;top:113.00px;width:1.00px;height:704.00px;background:#d6d6d6;"></div>
<div class="r" style="left:972px;top:201px;width:5px;height:616px;background:linear-gradient(to right,rgba(0,0,0,0.09),rgba(0,0,0,0))"></div>
<div class="r" style="left:972.00px;top:201.00px;width:5.00px;height:24.00px;background:#1f60c4;"></div>
<div class="r" style="left:972.00px;top:311.00px;width:5.00px;height:27.00px;background:#757575;"></div>
<div class="r" style="left:972.00px;top:424.00px;width:5.00px;height:27.00px;background:#3fae4f;"></div>
<div class="r" style="left:966.00px;top:133.00px;width:1.00px;height:65.00px;background:#e6e6e6;"></div>
<div class="t" style="left:119.50px;top:139.30px;font-size:15px;line-height:15px;font-weight:700;color:#3a3a3a;">At</div>
<div class="t" style="left:119.50px;top:159.30px;font-size:15px;line-height:15px;font-weight:700;color:#3a3a3a;">Risk</div>
<div class="t" style="left:172.50px;top:139.30px;font-size:15px;line-height:15px;font-weight:700;color:#3a3a3a;">Task Name</div>
<div class="t" style="left:470.30px;top:139.30px;font-size:15px;line-height:15px;font-weight:700;color:#3a3a3a;">Status</div>
<div class="t" style="left:587.50px;top:139.30px;font-size:15px;line-height:15px;font-weight:700;color:#3a3a3a;">Start</div>
<div class="t" style="left:587.50px;top:159.30px;font-size:15px;line-height:15px;font-weight:700;color:#3a3a3a;">Date</div>
<div class="t" style="left:673.50px;top:139.30px;font-size:15px;line-height:15px;font-weight:700;color:#3a3a3a;">End</div>
<div class="t" style="left:673.50px;top:159.30px;font-size:15px;line-height:15px;font-weight:700;color:#3a3a3a;">Date</div>
<div class="t" style="left:754.50px;top:139.30px;font-size:15px;line-height:15px;font-weight:700;color:#3a3a3a;">Assigned To</div>
<div class="t" style="left:884.50px;top:159.30px;font-size:15px;line-height:15px;font-weight:700;color:#3a3a3a;">Comp</div>
<svg class="r" style="left:119.3px;top:178.6px;" width="14" height="14" viewBox="0 0 14 14"><circle cx="7" cy="7" r="5.75" fill="none" stroke="#666" stroke-width="1.25"/><path d="M5.9 6.1 H7.4 V10.3 M6 10.4 H8.4" fill="none" stroke="#666" stroke-width="1.2"/><path d="M7.3 3.4 L7.8 4.4" stroke="#666" stroke-width="1.3"/></svg>
<svg class="r" style="left:470.7px;top:178.6px;" width="14" height="14" viewBox="0 0 14 14"><circle cx="7" cy="7" r="5.75" fill="none" stroke="#666" stroke-width="1.25"/><path d="M5.9 6.1 H7.4 V10.3 M6 10.4 H8.4" fill="none" stroke="#666" stroke-width="1.2"/><path d="M7.3 3.4 L7.8 4.4" stroke="#666" stroke-width="1.3"/></svg>
<svg class="r" style="left:754.2px;top:178.6px;" width="14" height="14" viewBox="0 0 14 14"><circle cx="7" cy="7" r="5.75" fill="none" stroke="#666" stroke-width="1.25"/><path d="M5.9 6.1 H7.4 V10.3 M6 10.4 H8.4" fill="none" stroke="#666" stroke-width="1.2"/><path d="M7.3 3.4 L7.8 4.4" stroke="#666" stroke-width="1.3"/></svg>
<svg class="r" style="left:885.6px;top:178.6px;" width="14" height="14" viewBox="0 0 14 14"><circle cx="7" cy="7" r="5.75" fill="none" stroke="#666" stroke-width="1.25"/><path d="M5.9 6.1 H7.4 V10.3 M6 10.4 H8.4" fill="none" stroke="#666" stroke-width="1.2"/><path d="M7.3 3.4 L7.8 4.4" stroke="#666" stroke-width="1.3"/></svg>
<div class="r" style="left:95.30px;top:177.80px;width:1.40px;height:2.00px;background:#9a9a9a;"></div>
<div class="r" style="left:95.30px;top:181.00px;width:1.20px;height:6.00px;background:#c4c4c4;"></div>
<div class="r" style="left:95.30px;top:188.80px;width:1.40px;height:2.00px;background:#9a9a9a;"></div>
<div class="t" style="left:1208.50px;top:141.10px;font-size:15px;line-height:15px;font-weight:700;color:#3a3a3a;">Apr 18</div>
<div class="t" style="left:969.39px;width:30px;text-align:center;top:164.70px;font-size:15px;line-height:15px;color:#d9262c">S</div>
<div class="t" style="left:994.18px;width:30px;text-align:center;top:164.70px;font-size:15px;line-height:15px;color:#454545">M</div>
<div class="t" style="left:1018.98px;width:30px;text-align:center;top:164.70px;font-size:15px;line-height:15px;color:#454545">T</div>
<div class="t" style="left:1043.76px;width:30px;text-align:center;top:164.70px;font-size:15px;line-height:15px;color:#454545">W</div>
<div class="t" style="left:1068.56px;width:30px;text-align:center;top:164.70px;font-size:15px;line-height:15px;color:#454545">T</div>
<div class="t" style="left:1093.35px;width:30px;text-align:center;top:164.70px;font-size:15px;line-height:15px;color:#454545">F</div>
<div class="t" style="left:1118.13px;width:30px;text-align:center;top:164.70px;font-size:15px;line-height:15px;color:#d9262c">S</div>
<div class="t" style="left:1142.92px;width:30px;text-align:center;top:164.70px;font-size:15px;line-height:15px;color:#d9262c">S</div>
<div class="t" style="left:1167.71px;width:30px;text-align:center;top:164.70px;font-size:15px;line-height:15px;color:#454545">M</div>
<div class="t" style="left:1192.50px;width:30px;text-align:center;top:164.70px;font-size:15px;line-height:15px;color:#454545">T</div>
<div class="t" style="left:1217.30px;width:30px;text-align:center;top:164.70px;font-size:15px;line-height:15px;color:#454545">W</div>
<div class="t" style="left:1242.09px;width:30px;text-align:center;top:164.70px;font-size:15px;line-height:15px;color:#454545">T</div>
<div class="t" style="left:1266.88px;width:30px;text-align:center;top:164.70px;font-size:15px;line-height:15px;color:#454545">F</div>
<div class="t" style="left:1291.66px;width:30px;text-align:center;top:164.70px;font-size:15px;line-height:15px;color:#d9262c">S</div>
<div class="t" style="left:1316.45px;width:30px;text-align:center;top:164.70px;font-size:15px;line-height:15px;color:#d9262c">S</div>
<div class="t" style="left:20px;width:48px;text-align:right;top:204.50px;font-size:14.3px;line-height:14px;color:#8a8a8a;-webkit-text-stroke:0.2px #8a8a8a">2</div>
<svg class="r" style="left:128.5px;top:201px;" width="14" height="18" viewBox="0 0 14 18"><path d="M1.1 0.2 V17" stroke="#ffffff" stroke-width="1.15"/><path d="M1.1 1.1 H12.3 L10 5.65 L12.3 10.2 H1.1 Z" fill="#ffffff"/></svg>
<div class="r" style="left:171px;top:203px;width:13px;height:13px;box-sizing:border-box;background:#e3e3e3;border:1px solid #d3d3d3;border-radius:2px"></div>
<div class="r" style="left:174.00px;top:208.50px;width:7.00px;height:2.00px;background:#2a2a2a;"></div>
<div class="t" style="left:189.50px;top:202.00px;font-size:15px;line-height:15px;font-weight:700;color:#fff;">Section 1 - enter your own text here</div>
<div class="t" style="left:584.00px;top:202.00px;font-size:15px;line-height:15px;font-weight:700;color:#fff;">04/15/21</div>
<div class="t" style="left:670.50px;top:202.00px;font-size:15px;line-height:15px;font-weight:700;color:#fff;">04/23/21</div>
<div class="t" style="left:20px;width:48px;text-align:right;top:233.30px;font-size:14.3px;line-height:14px;color:#8a8a8a;-webkit-text-stroke:0.2px #8a8a8a">3</div>
<svg class="r" style="left:128.5px;top:229px;" width="14" height="18" viewBox="0 0 14 18"><path d="M1.1 0.4 V17" stroke="#c6c6c6" stroke-width="1.1"/><path d="M1.1 2.5 H12.2 L9.9 6.25 L12.2 10 H1.1" fill="none" stroke="#c6c6c6" stroke-width="1.1"/></svg>
<div class="t" style="left:206.50px;top:230.00px;font-size:15px;line-height:15px;font-weight:400;color:#000;">Sub-task 1 - enter task and timing</div>
<div class="t" style="left:466.50px;top:230.00px;font-size:15px;line-height:15px;font-weight:400;color:#000;">Complete</div>
<div class="t" style="left:584.00px;top:230.00px;font-size:15px;line-height:15px;font-weight:400;color:#000;">04/15/21</div>
<div class="t" style="left:670.50px;top:230.00px;font-size:15px;line-height:15px;font-weight:400;color:#000;">04/20/21</div>
<div class="r" style="left:750px;top:228.40px;width:22.6px;height:22.6px;border-radius:50%;background:#cd7a50"></div>
<div class="t" style="left:750px;width:22.6px;text-align:center;top:233.70px;font-size:12px;line-height:12px;font-weight:700;color:#fff;letter-spacing:-0.5px">AW</div>
<div class="t" style="left:778.30px;top:232.00px;font-size:15px;line-height:15px;font-weight:400;color:#000;">Abby Wright</div>
<div class="t" style="left:20px;width:48px;text-align:right;top:261.30px;font-size:14.3px;line-height:14px;color:#8a8a8a;-webkit-text-stroke:0.2px #8a8a8a">4</div>
<svg class="r" style="left:128.5px;top:257px;" width="14" height="18" viewBox="0 0 14 18"><path d="M1.1 0.4 V17" stroke="#c6c6c6" stroke-width="1.1"/><path d="M1.1 2.5 H12.2 L9.9 6.25 L12.2 10 H1.1" fill="none" stroke="#c6c6c6" stroke-width="1.1"/></svg>
<div class="t" style="left:206.50px;top:258.00px;font-size:15px;line-height:15px;font-weight:400;color:#000;">Sub-task 2</div>
<div class="t" style="left:466.50px;top:258.00px;font-size:15px;line-height:15px;font-weight:400;color:#000;">Complete</div>
<div class="t" style="left:584.00px;top:258.00px;font-size:15px;line-height:15px;font-weight:400;color:#000;">04/20/21</div>
<div class="t" style="left:670.50px;top:258.00px;font-size:15px;line-height:15px;font-weight:400;color:#000;">04/21/21</div>
<div class="r" style="left:750px;top:256.40px;width:22.6px;height:22.6px;border-radius:50%;background:#cd7a50"></div>
<div class="t" style="left:750px;width:22.6px;text-align:center;top:261.70px;font-size:12px;line-height:12px;font-weight:700;color:#fff;letter-spacing:-0.5px">AW</div>
<div class="t" style="left:778.30px;top:260.00px;font-size:15px;line-height:15px;font-weight:400;color:#000;">Abby Wright</div>
<div class="t" style="left:858px;width:100.5px;text-align:right;top:258.00px;font-size:15px;line-height:15px;color:#000">50%</div>
<div class="t" style="left:20px;width:48px;text-align:right;top:290.30px;font-size:14.3px;line-height:14px;color:#8a8a8a;-webkit-text-stroke:0.2px #8a8a8a">5</div>
<svg class="r" style="left:128.5px;top:285px;" width="14" height="18" viewBox="0 0 14 18"><path d="M1.1 0.4 V17" stroke="#c6c6c6" stroke-width="1.1"/><path d="M1.1 2.5 H12.2 L9.9 6.25 L12.2 10 H1.1" fill="none" stroke="#c6c6c6" stroke-width="1.1"/></svg>
<div class="t" style="left:206.50px;top:287.00px;font-size:15px;line-height:15px;font-weight:400;color:#000;">Sub-task 3</div>
<div class="t" style="left:466.50px;top:287.00px;font-size:15px;line-height:15px;font-weight:400;color:#000;">In Progress</div>
<div class="t" style="left:584.00px;top:287.00px;font-size:15px;line-height:15px;font-weight:400;color:#000;">04/22/21</div>
<div class="t" style="left:670.50px;top:287.00px;font-size:15px;line-height:15px;font-weight:400;color:#000;">04/23/21</div>
<div class="r" style="left:750px;top:284.40px;width:22.6px;height:22.6px;border-radius:50%;background:#3b9a5c"></div>
<div class="t" style="left:750px;width:22.6px;text-align:center;top:289.70px;font-size:12px;line-height:12px;font-weight:700;color:#fff;letter-spacing:-0.5px">BT</div>
<div class="t" style="left:778.30px;top:289.00px;font-size:15px;line-height:15px;font-weight:400;color:#000;">Bob Thorton</div>
<div class="t" style="left:858px;width:100.5px;text-align:right;top:287.00px;font-size:15px;line-height:15px;color:#000">0%</div>
<div class="t" style="left:20px;width:48px;text-align:right;top:318.30px;font-size:14.3px;line-height:14px;color:#8a8a8a;-webkit-text-stroke:0.2px #8a8a8a">6</div>
<svg class="r" style="left:128.5px;top:314px;" width="14" height="18" viewBox="0 0 14 18"><path d="M1.1 0.2 V17" stroke="#ffffff" stroke-width="1.15"/><path d="M1.1 1.1 H12.3 L10 5.65 L12.3 10.2 H1.1 Z" fill="#ffffff"/></svg>
<div class="r" style="left:171px;top:315px;width:13px;height:13px;box-sizing:border-box;background:#e3e3e3;border:1px solid #d3d3d3;border-radius:2px"></div>
<div class="r" style="left:174.00px;top:320.50px;width:7.00px;height:2.00px;background:#2a2a2a;"></div>
<div class="t" style="left:189.50px;top:315.00px;font-size:15px;line-height:15px;font-weight:700;color:#fff;">Section 2</div>
<div class="t" style="left:584.00px;top:315.00px;font-size:15px;line-height:15px;font-weight:700;color:#fff;">04/25/21</div>
<div class="t" style="left:670.50px;top:315.00px;font-size:15px;line-height:15px;font-weight:700;color:#fff;">04/28/21</div>
<div class="t" style="left:20px;width:48px;text-align:right;top:346.30px;font-size:14.3px;line-height:14px;color:#8a8a8a;-webkit-text-stroke:0.2px #8a8a8a">7</div>
<svg class="r" style="left:128.5px;top:342px;" width="14" height="18" viewBox="0 0 14 18"><path d="M1.1 0.4 V17" stroke="#c6c6c6" stroke-width="1.1"/><path d="M1.1 2.5 H12.2 L9.9 6.25 L12.2 10 H1.1" fill="none" stroke="#c6c6c6" stroke-width="1.1"/></svg>
<div class="t" style="left:206.50px;top:343.00px;font-size:15px;line-height:15px;font-weight:400;color:#000;">Sub-task 1</div>
<div class="t" style="left:466.50px;top:343.00px;font-size:15px;line-height:15px;font-weight:400;color:#000;">In Progress</div>
<div class="t" style="left:584.00px;top:343.00px;font-size:15px;line-height:15px;font-weight:400;color:#000;">04/25/21</div>
<div class="t" style="left:670.50px;top:343.00px;font-size:15px;line-height:15px;font-weight:400;color:#000;">04/26/21</div>
<div class="r" style="left:750px;top:341.40px;width:22.6px;height:22.6px;border-radius:50%;background:#3e6a30"></div>
<div class="t" style="left:750px;width:22.6px;text-align:center;top:346.70px;font-size:12px;line-height:12px;font-weight:700;color:#fff;letter-spacing:-0.5px">BM</div>
<div class="t" style="left:778.30px;top:345.00px;font-size:15px;line-height:15px;font-weight:400;color:#000;">Bobby Marsh</div>
<div class="t" style="left:20px;width:48px;text-align:right;top:374.30px;font-size:14.3px;line-height:14px;color:#8a8a8a;-webkit-text-stroke:0.2px #8a8a8a">8</div>
<svg class="r" style="left:128.5px;top:370px;" width="14" height="18" viewBox="0 0 14 18"><path d="M1.1 0.2 V17" stroke="#d2121c" stroke-width="1.15"/><path d="M1.1 1.1 H12.3 L10 5.65 L12.3 10.2 H1.1 Z" fill="#d2121c"/></svg>
<div class="t" style="left:206.50px;top:371.00px;font-size:15px;line-height:15px;font-weight:400;color:#e3342f;">Sub-task 2</div>
<div class="t" style="left:466.50px;top:371.00px;font-size:15px;line-height:15px;font-weight:400;color:#e3342f;">Not Started</div>
<div class="t" style="left:584.00px;top:371.00px;font-size:15px;line-height:15px;font-weight:400;color:#e3342f;">04/26/21</div>
<div class="t" style="left:670.50px;top:371.00px;font-size:15px;line-height:15px;font-weight:400;color:#e3342f;">04/28/21</div>
<div class="t" style="left:20px;width:48px;text-align:right;top:403.30px;font-size:14.3px;line-height:14px;color:#8a8a8a;-webkit-text-stroke:0.2px #8a8a8a">9</div>
<svg class="r" style="left:128.5px;top:398px;" width="14" height="18" viewBox="0 0 14 18"><path d="M1.1 0.4 V17" stroke="#c6c6c6" stroke-width="1.1"/><path d="M1.1 2.5 H12.2 L9.9 6.25 L12.2 10 H1.1" fill="none" stroke="#c6c6c6" stroke-width="1.1"/></svg>
<div class="t" style="left:206.50px;top:400.00px;font-size:15px;line-height:15px;font-weight:400;color:#000;">Sub-task 3</div>
<div class="t" style="left:466.50px;top:400.00px;font-size:15px;line-height:15px;font-weight:400;color:#000;">Not Started</div>
<div class="t" style="left:584.00px;top:400.00px;font-size:15px;line-height:15px;font-weight:400;color:#000;">04/26/21</div>
<div class="t" style="left:670.50px;top:400.00px;font-size:15px;line-height:15px;font-weight:400;color:#000;">04/28/21</div>
<div class="t" style="left:20px;width:48px;text-align:right;top:431.30px;font-size:14.3px;line-height:14px;color:#8a8a8a;-webkit-text-stroke:0.2px #8a8a8a">10</div>
<svg class="r" style="left:128.5px;top:427px;" width="14" height="18" viewBox="0 0 14 18"><path d="M1.1 0.2 V17" stroke="#ffffff" stroke-width="1.15"/><path d="M1.1 1.1 H12.3 L10 5.65 L12.3 10.2 H1.1 Z" fill="#ffffff"/></svg>
<div class="r" style="left:171px;top:428px;width:13px;height:13px;box-sizing:border-box;background:#e3e3e3;border:1px solid #d3d3d3;border-radius:2px"></div>
<div class="r" style="left:174.00px;top:433.50px;width:7.00px;height:2.00px;background:#2a2a2a;"></div>
<div class="t" style="left:189.50px;top:428.00px;font-size:15px;line-height:15px;font-weight:700;color:#fff;">Section 3</div>
<div class="t" style="left:584.00px;top:428.00px;font-size:15px;line-height:15px;font-weight:700;color:#fff;">04/28/21</div>
<div class="t" style="left:670.50px;top:428.00px;font-size:15px;line-height:15px;font-weight:700;color:#fff;">05/08/21</div>
<div class="t" style="left:20px;width:48px;text-align:right;top:459.30px;font-size:14.3px;line-height:14px;color:#8a8a8a;-webkit-text-stroke:0.2px #8a8a8a">11</div>
<svg class="r" style="left:128.5px;top:455px;" width="14" height="18" viewBox="0 0 14 18"><path d="M1.1 0.4 V17" stroke="#c6c6c6" stroke-width="1.1"/><path d="M1.1 2.5 H12.2 L9.9 6.25 L12.2 10 H1.1" fill="none" stroke="#c6c6c6" stroke-width="1.1"/></svg>
<div class="t" style="left:206.50px;top:456.00px;font-size:15px;line-height:15px;font-weight:400;color:#000;">Sub-task 1</div>
<div class="t" style="left:584.00px;top:456.00px;font-size:15px;line-height:15px;font-weight:400;color:#000;">04/28/21</div>
<div class="t" style="left:670.50px;top:456.00px;font-size:15px;line-height:15px;font-weight:400;color:#000;">05/03/21</div>
<div class="t" style="left:20px;width:48px;text-align:right;top:487.30px;font-size:14.3px;line-height:14px;color:#8a8a8a;-webkit-text-stroke:0.2px #8a8a8a">12</div>
<svg class="r" style="left:128.5px;top:483px;" width="14" height="18" viewBox="0 0 14 18"><path d="M1.1 0.4 V17" stroke="#c6c6c6" stroke-width="1.1"/><path d="M1.1 2.5 H12.2 L9.9 6.25 L12.2 10 H1.1" fill="none" stroke="#c6c6c6" stroke-width="1.1"/></svg>
<div class="t" style="left:206.50px;top:484.00px;font-size:15px;line-height:15px;font-weight:400;color:#000;">Sub-task 2</div>
<div class="t" style="left:584.00px;top:484.00px;font-size:15px;line-height:15px;font-weight:400;color:#000;">05/03/21</div>
<div class="t" style="left:670.50px;top:484.00px;font-size:15px;line-height:15px;font-weight:400;color:#000;">05/05/21</div>
<div class="t" style="left:20px;width:48px;text-align:right;top:516.30px;font-size:14.3px;line-height:14px;color:#8a8a8a;-webkit-text-stroke:0.2px #8a8a8a">13</div>
<svg class="r" style="left:128.5px;top:511px;" width="14" height="18" viewBox="0 0 14 18"><path d="M1.1 0.4 V17" stroke="#c6c6c6" stroke-width="1.1"/><path d="M1.1 2.5 H12.2 L9.9 6.25 L12.2 10 H1.1" fill="none" stroke="#c6c6c6" stroke-width="1.1"/></svg>
<div class="r" style="left:188px;top:513px;width:13px;height:13px;box-sizing:border-box;background:#e3e3e3;border:1px solid #d3d3d3;border-radius:2px"></div>
<div class="r" style="left:191.00px;top:518.50px;width:7.00px;height:2.00px;background:#2a2a2a;"></div>
<div class="t" style="left:206.50px;top:513.00px;font-size:15px;line-height:15px;font-weight:400;color:#000;">Sub-task 3 - set multiple levels</div>
<div class="t" style="left:584.00px;top:513.00px;font-size:15px;line-height:15px;font-weight:400;color:#000;">05/05/21</div>
<div class="t" style="left:670.50px;top:513.00px;font-size:15px;line-height:15px;font-weight:400;color:#000;">05/08/21</div>
<div class="t" style="left:20px;width:48px;text-align:right;top:544.30px;font-size:14.3px;line-height:14px;color:#8a8a8a;-webkit-text-stroke:0.2px #8a8a8a">14</div>
<svg class="r" style="left:128.5px;top:540px;" width="14" height="18" viewBox="0 0 14 18"><path d="M1.1 0.4 V17" stroke="#c6c6c6" stroke-width="1.1"/><path d="M1.1 2.5 H12.2 L9.9 6.25 L12.2 10 H1.1" fill="none" stroke="#c6c6c6" stroke-width="1.1"/></svg>
<div class="t" style="left:224.00px;top:541.00px;font-size:15px;line-height:15px;font-weight:400;color:#000;">Sub-task 1</div>
<div class="t" style="left:584.00px;top:541.00px;font-size:15px;line-height:15px;font-weight:400;color:#000;">05/05/21</div>
<div class="t" style="left:670.50px;top:541.00px;font-size:15px;line-height:15px;font-weight:400;color:#000;">05/06/21</div>
<div class="t" style="left:20px;width:48px;text-align:right;top:572.30px;font-size:14.3px;line-height:14px;color:#8a8a8a;-webkit-text-stroke:0.2px #8a8a8a">15</div>
<svg class="r" style="left:128.5px;top:568px;" width="14" height="18" viewBox="0 0 14 18"><path d="M1.1 0.4 V17" stroke="#c6c6c6" stroke-width="1.1"/><path d="M1.1 2.5 H12.2 L9.9 6.25 L12.2 10 H1.1" fill="none" stroke="#c6c6c6" stroke-width="1.1"/></svg>
<div class="t" style="left:224.00px;top:569.00px;font-size:15px;line-height:15px;font-weight:400;color:#000;">Sub-task 2</div>
<div class="t" style="left:584.00px;top:569.00px;font-size:15px;line-height:15px;font-weight:400;color:#000;">05/05/21</div>
<div class="t" style="left:670.50px;top:569.00px;font-size:15px;line-height:15px;font-weight:400;color:#000;">05/08/21</div>
<div class="t" style="left:20px;width:48px;text-align:right;top:600.30px;font-size:14.3px;line-height:14px;color:#8a8a8a;-webkit-text-stroke:0.2px #8a8a8a">16</div>
<div class="t" style="left:20px;width:48px;text-align:right;top:629.30px;font-size:14.3px;line-height:14px;color:#8a8a8a;-webkit-text-stroke:0.2px #8a8a8a">17</div>
<div class="t" style="left:20px;width:48px;text-align:right;top:657.30px;font-size:14.3px;line-height:14px;color:#8a8a8a;-webkit-text-stroke:0.2px #8a8a8a">18</div>
<div class="t" style="left:20px;width:48px;text-align:right;top:685.30px;font-size:14.3px;line-height:14px;color:#8a8a8a;-webkit-text-stroke:0.2px #8a8a8a">19</div>
<div class="t" style="left:20px;width:48px;text-align:right;top:713.30px;font-size:14.3px;line-height:14px;color:#8a8a8a;-webkit-text-stroke:0.2px #8a8a8a">20</div>
<div class="t" style="left:20px;width:48px;text-align:right;top:742.30px;font-size:14.3px;line-height:14px;color:#8a8a8a;-webkit-text-stroke:0.2px #8a8a8a">21</div>
<div class="t" style="left:20px;width:48px;text-align:right;top:770.30px;font-size:14.3px;line-height:14px;color:#8a8a8a;-webkit-text-stroke:0.2px #8a8a8a">22</div>
<div class="t" style="left:20px;width:48px;text-align:right;top:798.30px;font-size:14.3px;line-height:14px;color:#8a8a8a;-webkit-text-stroke:0.2px #8a8a8a">23</div>
<div class="r" style="left:1071.16px;top:204.00px;width:221.11px;height:14px;background:#c6e4f6;border:1px solid #a9b3ba;box-sizing:content-box"></div>
<div class="r" style="left:1071.16px;top:207.00px;width:77.64px;height:8px;background:#e2f1fb;border:1px solid #a9b3ba"></div>
<div class="t" style="left:1300.57px;top:201.50px;font-size:13px;line-height:13px;font-weight:400;color:#333;">Section 1 - enter your own text here</div>
<div class="r" style="left:1071.16px;top:232.20px;width:146.74px;height:14px;background:#c6e4f6;border:1px solid #a9b3ba;box-sizing:content-box"></div>
<div class="r" style="left:1071.16px;top:235.20px;width:72.34px;height:8px;background:#e2f1fb;border:1px solid #a9b3ba"></div>
<div class="t" style="left:1226.20px;top:229.70px;font-size:13px;line-height:13px;font-weight:400;color:#444;">Sub-task 1 - enter task and timing</div>
<div class="r" style="left:1195.11px;top:260.20px;width:47.58px;height:14px;background:#c6e4f6;border:1px solid #a9b3ba;box-sizing:content-box"></div>
<div class="r" style="left:1195.11px;top:263.20px;width:22.49px;height:8px;background:#e2f1fb;border:1px solid #a9b3ba"></div>
<div class="t" style="left:1250.99px;top:257.70px;font-size:13px;line-height:13px;font-weight:400;color:#444;">Sub-task 2</div>
<div class="r" style="left:1244.69px;top:288.20px;width:47.58px;height:14px;background:#c6e4f6;border:1px solid #a9b3ba;box-sizing:content-box"></div>
<div class="t" style="left:1300.57px;top:285.70px;font-size:13px;line-height:13px;font-weight:400;color:#444;">Sub-task 3</div>
<div class="r" style="left:1319.06px;top:317.20px;width:97.16px;height:14px;background:#c6e4f6;border:1px solid #a9b3ba;box-sizing:content-box"></div>
<div class="r" style="left:1319.06px;top:345.20px;width:47.58px;height:14px;background:#c6e4f6;border:1px solid #a9b3ba;box-sizing:content-box"></div>
<div class="r" style="left:1070px;top:201px;width:0;height:616px;border-left:1.3px dashed #333"></div>
<div class="r" style="left:924px;top:113px;width:156px;height:135px;background:#f3f3f3;box-shadow:0 2px 6px rgba(0,0,0,0.12);border-radius:0 0 3px 3px"></div>
<div class="r" style="left:930px;top:120px;width:143px;height:27.5px;background:#e5e5e5;border:0.8px solid #d8d8d8;border-radius:3px"></div>
<div class="t" style="left:930px;width:107.5px;text-align:right;top:127.5px;font-size:15px;line-height:15px;color:#3a3a3a">Automatic</div>
<div class="r" style="left:931.20px;top:153.00px;width:15.6px;height:15.6px;background:#8e1111;"></div>
<div class="r" style="left:949.30px;top:153.00px;width:15.6px;height:15.6px;background:#de4a06;"></div>
<div class="r" style="left:967.40px;top:153.00px;width:15.6px;height:15.6px;background:#e0b902;"></div>
<div class="r" style="left:985.50px;top:153.00px;width:15.6px;height:15.6px;background:#1f7a2b;"></div>
<div class="r" style="left:1003.60px;top:153.00px;width:15.6px;height:15.6px;background:#0b2f7b;"></div>
<div class="r" style="left:1021.70px;top:153.00px;width:15.6px;height:15.6px;background:#5b0089;"></div>
<div class="r" style="left:1039.80px;top:153.00px;width:15.6px;height:15.6px;background:#5a2d01;"></div>
<div class="r" style="left:1057.90px;top:153.00px;width:15.6px;height:15.6px;background:#000000;"></div>
<div class="r" style="left:931.20px;top:171.05px;width:15.6px;height:15.6px;background:#e8302f;"></div>
<div class="r" style="left:949.30px;top:171.05px;width:15.6px;height:15.6px;background:#fd8b04;"></div>
<div class="r" style="left:967.40px;top:171.05px;width:15.6px;height:15.6px;background:#ffea00;"></div>
<div class="r" style="left:985.50px;top:171.05px;width:15.6px;height:15.6px;background:#3caf4c;"></div>
<div class="r" style="left:1003.60px;top:171.05px;width:15.6px;height:15.6px;background:#1e5fc1;box-shadow:inset 0 0 0 1.5px #123a75;"></div>
<div class="r" style="left:1021.70px;top:171.05px;width:15.6px;height:15.6px;background:#8b1cb1;"></div>
<div class="r" style="left:1039.80px;top:171.05px;width:15.6px;height:15.6px;background:#964c00;"></div>
<div class="r" style="left:1057.90px;top:171.05px;width:15.6px;height:15.6px;background:#757575;"></div>
<div class="r" style="left:931.20px;top:189.10px;width:15.6px;height:15.6px;background:#f57f7e;"></div>
<div class="r" style="left:949.30px;top:189.10px;width:15.6px;height:15.6px;background:#fbcd7b;"></div>
<div class="r" style="left:967.40px;top:189.10px;width:15.6px;height:15.6px;background:#ffff00;"></div>
<div class="r" style="left:985.50px;top:189.10px;width:15.6px;height:15.6px;background:#7ecf88;"></div>
<div class="r" style="left:1003.60px;top:189.10px;width:15.6px;height:15.6px;background:#5db5f8;"></div>
<div class="r" style="left:1021.70px;top:189.10px;width:15.6px;height:15.6px;background:#d18cdb;"></div>
<div class="r" style="left:1039.80px;top:189.10px;width:15.6px;height:15.6px;background:#d5a98b;"></div>
<div class="r" style="left:1057.90px;top:189.10px;width:15.6px;height:15.6px;background:#b9b9b9;"></div>
<div class="r" style="left:931.20px;top:207.15px;width:15.6px;height:15.6px;background:#f9c9cd;"></div>
<div class="r" style="left:949.30px;top:207.15px;width:15.6px;height:15.6px;background:#fde0ae;"></div>
<div class="r" style="left:967.40px;top:207.15px;width:15.6px;height:15.6px;background:#fdfb85;"></div>
<div class="r" style="left:985.50px;top:207.15px;width:15.6px;height:15.6px;background:#c6e6c7;"></div>
<div class="r" style="left:1003.60px;top:207.15px;width:15.6px;height:15.6px;background:#b7dcfa;"></div>
<div class="r" style="left:1021.70px;top:207.15px;width:15.6px;height:15.6px;background:#ebc5ef;"></div>
<div class="r" style="left:1039.80px;top:207.15px;width:15.6px;height:15.6px;background:#f1dcc9;"></div>
<div class="r" style="left:1057.90px;top:207.15px;width:15.6px;height:15.6px;background:#e5e5e5;box-shadow:inset 0 0 0 0.6px rgba(0,0,0,0.08);"></div>
<div class="r" style="left:931.20px;top:225.20px;width:15.6px;height:15.6px;background:#fde9eb;box-shadow:inset 0 0 0 0.6px rgba(0,0,0,0.08);"></div>
<div class="r" style="left:949.30px;top:225.20px;width:15.6px;height:15.6px;background:#fdf3df;box-shadow:inset 0 0 0 0.6px rgba(0,0,0,0.08);"></div>
<div class="r" style="left:967.40px;top:225.20px;width:15.6px;height:15.6px;background:#fffde6;box-shadow:inset 0 0 0 0.6px rgba(0,0,0,0.08);"></div>
<div class="r" style="left:985.50px;top:225.20px;width:15.6px;height:15.6px;background:#e6f4e7;box-shadow:inset 0 0 0 0.6px rgba(0,0,0,0.08);"></div>
<div class="r" style="left:1003.60px;top:225.20px;width:15.6px;height:15.6px;background:#e2f2fd;box-shadow:inset 0 0 0 0.6px rgba(0,0,0,0.08);"></div>
<div class="r" style="left:1021.70px;top:225.20px;width:15.6px;height:15.6px;background:#f4e3f7;box-shadow:inset 0 0 0 0.6px rgba(0,0,0,0.08);"></div>
<div class="r" style="left:1039.80px;top:225.20px;width:15.6px;height:15.6px;background:#f4e8df;box-shadow:inset 0 0 0 0.6px rgba(0,0,0,0.08);"></div>
<div class="r" style="left:1057.90px;top:225.20px;width:15.6px;height:15.6px;background:#ffffff;box-shadow:inset 0 0 0 0.6px rgba(0,0,0,0.08);"></div>
<div class="r" style="left:876px;top:118px;width:153px;height:40px;box-sizing:border-box;background:#f2f2f2;border:1.6px solid #2f7be8;border-radius:5px;box-shadow:0 1px 3px rgba(0,0,0,0.08)"><div style="position:absolute;left:0;top:0;right:0;bottom:0;border:1.5px solid #c9dcf5;border-radius:3.5px"></div></div>
<div class="t" style="left:888.00px;top:131.74px;font-size:14.6px;line-height:14.6px;font-weight:700;color:#353535;">Background Color</div>
</body></html>
